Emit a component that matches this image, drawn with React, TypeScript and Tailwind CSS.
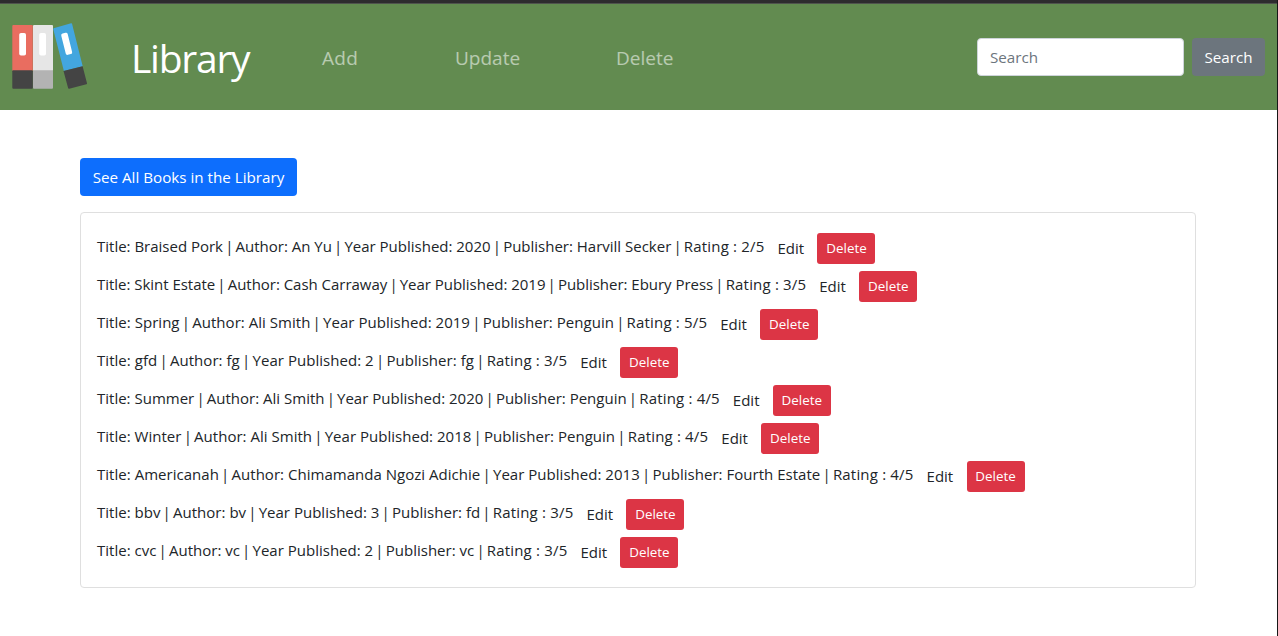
import React, { Fragment } from 'react';

type Book = {
  title: string;
  author: string;
  year: string;
  publisher: string;
  rating: string;
  tracking: string;
};

const books: Book[] = [
  { title: 'Braised Pork', author: 'An Yu', year: '2020', publisher: 'Harvill Secker', rating: '2/5', tracking: 'tracking-[-0.005px]' },
  { title: 'Skint Estate', author: 'Cash Carraway', year: '2019', publisher: 'Ebury Press', rating: '3/5', tracking: 'tracking-[-0.026px]' },
  { title: 'Spring', author: 'Ali Smith', year: '2019', publisher: 'Penguin', rating: '5/5', tracking: 'tracking-[0.034px]' },
  { title: 'gfd', author: 'fg', year: '2', publisher: 'fg', rating: '3/5', tracking: 'tracking-[0.043px]' },
  { title: 'Summer', author: 'Ali Smith', year: '2020', publisher: 'Penguin', rating: '4/5', tracking: 'tracking-[0.003px]' },
  { title: 'Winter', author: 'Ali Smith', year: '2018', publisher: 'Penguin', rating: '4/5', tracking: 'tracking-[0.022px]' },
  { title: 'Americanah', author: 'Chimamanda Ngozi Adichie', year: '2013', publisher: 'Fourth Estate', rating: '4/5', tracking: 'tracking-[0.027px]' },
  { title: 'bbv', author: 'bv', year: '3', publisher: 'fd', rating: '3/5', tracking: 'tracking-[0.014px]' },
  { title: 'cvc', author: 'vc', year: '2', publisher: 'vc', rating: '3/5', tracking: 'tracking-[0.008px]' },
];

function Logo() {
  return (
    <svg className="mb-[2px] block h-[68px] w-[78px] shrink-0" viewBox="11 22 78 68">
      <rect x="12.3" y="25" width="20.5" height="46" rx="1" fill="#e96d60" />
      <rect x="12.3" y="70.3" width="20.5" height="18.5" rx="1" fill="#444" />
      <rect x="33" y="25" width="20" height="46" rx="1" fill="#e6e6e6" />
      <rect x="33" y="70.3" width="20" height="18.5" rx="1" fill="#b3b3b3" />
      <rect x="19.2" y="33" width="6.8" height="22.5" rx="1.8" fill="#fff" />
      <rect x="39.2" y="33" width="6.8" height="22.5" rx="1.8" fill="#fff" />
      <path d="M53.6 28.2 71 23.2Q71.9 23 72.1 23.9L82.7 66.2 63.9 71 53.2 29Z" fill="#43a6df" />
      <path d="M63.5 71 82.6 66.2 87 83.3Q87.2 84.1 86.4 84.3L69.2 88.7Q68.3 88.9 68.1 88Z" fill="#444" />
      <rect x="63.4" y="32.8" width="6.6" height="22" rx="1.8" fill="#fff" transform="rotate(-14 66.7 43.8)" />
    </svg>
  );
}

function BookRow({ book }: { book: Book }) {
  const parts = [
    `Title: ${book.title}`,
    `Author: ${book.author}`,
    `Year Published: ${book.year}`,
    `Publisher: ${book.publisher}`,
    `Rating : ${book.rating}`,
  ];
  return (
    <div className="flex h-[38px] items-center whitespace-nowrap">
      <span className={`pb-[3px] text-[15px] ${book.tracking}`}>
        {parts.map((part, i) => (
          <Fragment key={i}>
            {i > 0 && (
              <>
                {' '}
                <span className="mx-[-1.75px]">|</span>{' '}
              </>
            )}
            <span className={i === 4 ? 'tracking-[0.18px]' : ''}>{part}</span>
          </Fragment>
        ))}
      </span>
      <span className="ml-[13px] w-[27px] text-[15px]">Edit</span>
      <button className="ml-[13px] h-[31px] w-[58px] rounded-[3px] bg-[#dc3545] pt-px text-[13.4px] text-white">Delete</button>
    </div>
  );
}

export default function App() {
  return (
    <div className="flex h-[636px] w-[1278px] flex-col overflow-hidden border-r border-[#171717] bg-white font-['Open_Sans',sans-serif] text-base text-[#212529]">
      <div className="h-[4px] shrink-0 border-b border-[#4f534d] bg-[#2d2c2e]" />
      <header className="flex h-[106px] shrink-0 items-center bg-[#628b50] pr-3 pl-[11px]">
        <Logo />
        <span className="ml-[42px] w-[191px] pt-px text-[39px] leading-[60px] tracking-[-1.25px] text-white">Library</span>
        <nav className="flex pt-[3px] text-[19px] text-white/55">
          <a className="w-[133px] tracking-[0.3px]">Add</a>
          <a className="w-[161px]">Update</a>
          <a>Delete</a>
        </nav>
        <form className="ml-auto flex gap-2 text-[15.2px]">
          <input
            placeholder="Search"
            className="h-[38px] w-[207px] rounded border border-[#ced4da] bg-white px-3 placeholder:text-[#6c757d]"
          />
          <button type="button" className="h-[38px] w-[73px] rounded bg-[#6c757d] text-white">Search</button>
        </form>
      </header>
      <main className="flex w-[1196px] flex-col items-start pt-12 pl-20">
        <button className="h-[38px] w-[217px] rounded bg-[#0d6efd] text-[15.2px] whitespace-nowrap text-white">See All Books in the Library</button>
        <section className="mt-4 h-[376px] w-[1116px] rounded border border-[#dfdfdf] px-4 pt-4">
          {books.map((book) => (
            <BookRow key={book.title} book={book} />
          ))}
        </section>
      </main>
    </div>
  );
}
